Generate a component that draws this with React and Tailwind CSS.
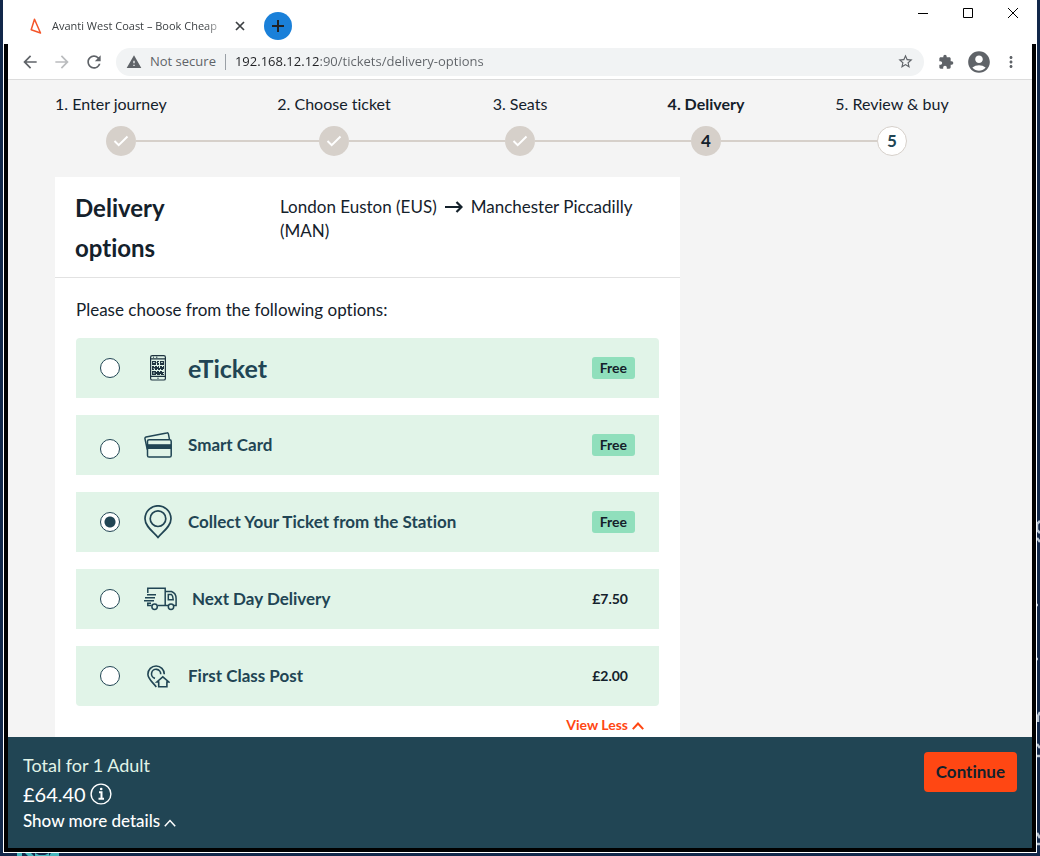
import { useState } from "react";
import {
  MdAccountCircle,
  MdArrowBack,
  MdArrowForward,
  MdExtension,
  MdMoreVert,
  MdRefresh,
  MdStarBorder,
  MdWarning,
} from "react-icons/md";

const steps = [
  { n: 1, label: "1. Enter journey" },
  { n: 2, label: "2. Choose ticket" },
  { n: 3, label: "3. Seats" },
  { n: 4, label: "4. Delivery" },
  { n: 5, label: "5. Review & buy" },
];
const CURRENT = 4;

function PhoneIcon() {
  return (
    <svg width="16" height="26" viewBox="0 0 16 26" fill="none" stroke="#1f3440" strokeWidth="1.2">
      <rect x="0.6" y="0.6" width="14.8" height="24.4" rx="1.6" />
      <path d="M.6 3.9h14.8M.6 21.4h14.8" />
      <path d="M3 2.2h1M6 2.2h1.4M7.3 23.2h1.4" strokeWidth="1" />
      <path
        fill="#1f3440"
        stroke="none"
        d="M2 6h4v4H2zM10 6h4v4h-4zM7 6h2v1H8v1h1v2H7V8H6.500V7H7zM2 11h2v1h1v-1h2v1h1v-1h1v2h1v-2h2v1h1v-1h1v3h-1v1h-2v-1h-1v1H8v-1H7v1H5v-1H4v1H2zM2 16h4v1h1v-1h2v1h1v-1h2v1h2v1h-1v1h1v1h-3v-1h-1v1H7v-1H6v1H2z"
      />
      <path d="M3.200 7.500h1.500M11.200 7.500h1.500M3.500 13.500h1M3.200 18h1.500" stroke="#e1f4e8" strokeWidth="1" />
    </svg>
  );
}

function CardsIcon() {
  return (
    <svg width="28" height="26" viewBox="0 0 28 26" fill="none" stroke="#214554" strokeWidth="1.5">
      <path d="M3.300 17.500 1 6.800c-.2-.9.200-1.500 1-1.700L22.700.9c.8-.2 1.500.2 1.700 1l1 5.300" />
      <rect x="3.500" y="7.700" width="23.700" height="17.300" rx="1.600" />
      <path d="M3.500 14.600h23.700" strokeWidth="4.800" />
    </svg>
  );
}

function PinIcon() {
  return (
    <svg width="28" height="34" viewBox="0 0 28 34" fill="none" stroke="#214554" strokeWidth="1.700">
      <path d="M14 32.500C9.500 27 1 21.500 1 13.800a13 13 0 0 1 26 0C27 21.500 18.500 27 14 32.500z" />
      <circle cx="14" cy="13.700" r="7.800" />
    </svg>
  );
}

function TruckIcon() {
  return (
    <svg width="33" height="24" viewBox="0 0 33 24" fill="none" stroke="#214554" strokeWidth="1.500">
      <path d="M3.800 6V1.200h17.400v17.300h-7.500M3.800 16.500v2h3.800M21.200 4.500h6.300c2.700 1 4.600 4 4.600 7v7h-2.300M21.200 18.500h2.800" />
      <path d="M3 7.800h9M1 10.800h10M0 13.800h10M3 16.300h4" />
      <path d="M24.300 7.500h3.200c1 .8 1.600 2.500 1.700 5.200h-4.900z" />
      <circle cx="10.600" cy="19.800" r="2.700" />
      <circle cx="27" cy="19.800" r="2.700" />
    </svg>
  );
}

function HomePinIcon() {
  return (
    <svg width="23" height="23" viewBox="0 0 23 23" fill="none" stroke="#214554" strokeWidth="1.600">
      <path d="M9.300 22C6 17.500 .9 14 .9 9.200a8.200 8.200 0 0 1 16.400 0" />
      <path d="M8 13.400a4.600 4.600 0 1 1 5.700-4.200" />
      <path d="M9.800 17l6-5.200 6 5.200h-1.900v4.800h-8.200V17z" />
    </svg>
  );
}

const options = [
  { id: "eticket", title: "eTicket", price: "Free", Icon: PhoneIcon, shape: "rounded-t", titleCls: "text-[25px]", iconCls: "pl-1.5 w-11", radioCls: "" },
  { id: "smart", title: "Smart Card", price: "Free", Icon: CardsIcon, shape: "", titleCls: "text-[17px]", iconCls: "w-11", radioCls: "mt-2" },
  { id: "station", title: "Collect Your Ticket from the Station", price: "Free", Icon: PinIcon, shape: "", titleCls: "text-[17px]", iconCls: "w-11", radioCls: "" },
  { id: "nextday", title: "Next Day Delivery", price: "£7.50", Icon: TruckIcon, shape: "", titleCls: "text-[17px]", iconCls: "w-12", radioCls: "" },
  { id: "post", title: "First Class Post", price: "£2.00", Icon: HomePinIcon, shape: "rounded-b", titleCls: "text-[17px]", iconCls: "w-11 pl-[3px]", radioCls: "" },
];

function Step({ n, label }) {
  const first = n === 1;
  const last = n === steps.length;
  const done = n < CURRENT;
  const line = "h-0.5 flex-1";
  return (
    <li className="flex flex-col gap-2.5">
      <span className={`${first ? "text-left" : "text-center"} ${n === CURRENT ? "font-bold" : ""} whitespace-nowrap text-base`}>
        {label}
      </span>
      <div className="flex items-center">
        {first ? <span className="w-[51px]" /> : <span className={`${line} bg-[#d6d0ca]`} />}
        <span
          className={`flex size-[30px] items-center justify-center rounded-full text-[17px] font-bold ${
            last ? "border border-[#d6d0ca] bg-white text-[#214554]" : "bg-[#d6d0ca]"
          }`}
        >
          {done ? (
            <svg width="16" height="12" viewBox="0 0 16 12" fill="none" stroke="#fff" strokeWidth="2">
              <path d="M1.500 6l4.200 4.200L14.500 1.500" />
            </svg>
          ) : (
            n
          )}
        </span>
        <span className={last ? line : `${line} bg-[#d6d0ca]`} />
      </div>
    </li>
  );
}

function Chevron({ width, height, weight }) {
  return (
    <svg width={width} height={height} viewBox="0 0 12 8" fill="none" stroke="currentColor" strokeWidth={weight}>
      <path d="M.8 7.200L6 1.500l5.200 5.700" />
    </svg>
  );
}

function TitleBar() {
  return (
    <header className="flex h-11 items-start justify-between pl-6 pr-[18px]">
      <div className="flex items-center pt-3">
        <svg width="12" height="16" viewBox="0 0 12 16" fill="none" stroke="#f4552a" strokeWidth="1.500" strokeLinejoin="round" className="ml-0.5">
          <path d="M4.500 1.200L1.200 11.800l9.300 3.200z" />
        </svg>
        <span className="ml-2.5 w-[174px] overflow-hidden whitespace-nowrap text-[11px] text-[#3c4043] [mask-image:linear-gradient(to_right,#000_88%,transparent)]">
          Avanti West Coast – Book Cheap
        </span>
        <button aria-label="Close tab" className="ml-2 flex size-3 items-center justify-center">
          <svg width="10" height="10" viewBox="0 0 10 10" stroke="#3c4043" strokeWidth="1.700">
            <path d="M1 1l8 8M9 1L1 9" />
          </svg>
        </button>
        <button aria-label="New tab" className="ml-[18px] flex size-7 items-center justify-center rounded-full bg-[#1a80d9]">
          <svg width="12" height="12" viewBox="0 0 12 12" stroke="#202124" strokeWidth="2">
            <path d="M6 0v12M0 6h12" />
          </svg>
        </button>
      </div>
      <div className="flex items-center gap-[35px] pt-2">
        <button aria-label="Minimize">
          <svg width="10" height="10" viewBox="0 0 10 10" stroke="#000">
            <path d="M0 5.500h10" />
          </svg>
        </button>
        <button aria-label="Maximize">
          <svg width="10" height="10" viewBox="0 0 10 10" fill="none" stroke="#000">
            <path d="M.5.5h9v9h-9z" />
          </svg>
        </button>
        <button aria-label="Close window">
          <svg width="10" height="10" viewBox="0 0 10 10" stroke="#000">
            <path d="M0 0l10 10M10 0L0 10" />
          </svg>
        </button>
      </div>
    </header>
  );
}

function Toolbar() {
  return (
    <nav className="flex h-9 items-center border-b border-[#dcdcdc] px-3 text-[#5f6368]">
      <button aria-label="Back"><MdArrowBack size={20} /></button>
      <button aria-label="Forward" className="ml-3 text-[#babcbe]"><MdArrowForward size={20} /></button>
      <button aria-label="Reload" className="ml-3"><MdRefresh size={20} /></button>
      <div className="ml-3 flex h-7 flex-1 items-center rounded-full bg-[#f1f3f4] px-2.5 text-[13px]">
        <MdWarning size={16} />
        <span className="ml-2">Not secure</span>
        <span className="mx-[9px] h-4 w-px bg-[#9aa0a6]" />
        <input
          aria-label="Address"
          defaultValue="192.168.12.12:90/tickets/delivery-options"
          className="min-w-0 flex-1 bg-[linear-gradient(to_right,#202124_85px,#5f6368_85px)] bg-clip-text text-transparent outline-none"
        />
        <button aria-label="Bookmark this page"><MdStarBorder size={17} /></button>
      </div>
      <button aria-label="Extensions" className="ml-3.5"><MdExtension size={16} /></button>
      <button aria-label="Profile" className="ml-3"><MdAccountCircle size={26} /></button>
      <button aria-label="Menu" className="ml-2.5"><MdMoreVert size={18} /></button>
    </nav>
  );
}

export default function App() {
  const [selected, setSelected] = useState("station");
  return (
    <div className="relative flex min-h-screen flex-col overflow-hidden bg-[#12284a] px-[3px] pb-[3px] font-['Open_Sans',sans-serif]">
      <svg className="absolute right-0 top-0" width="3" height="856" viewBox="0 0 3 856" fill="none" stroke="#b9c6d3" strokeWidth="2.500" aria-hidden="true">
        <path d="M3 521L0 524v6l3 3M0 538l3 4M0 605h1M0 659h1M3 712L1 716v6M0 744l3 4M0 756h3M0 833l3 5M0 844h3" />
      </svg>
      <svg className="absolute bottom-0 left-4" width="46" height="3" viewBox="0 0 46 3" fill="#45b7bd" aria-hidden="true">
        <path d="M1 0h5v3H1zM9 0h6l3 3H12zM19 0l4 2h6l4-2v3H19zM35 0h8v3H33z" />
      </svg>
      <div className="flex flex-1 flex-col bg-white px-px pb-px">
        <TitleBar />
        <div className="flex flex-1 flex-col border-4 border-t-0 border-black">
          <Toolbar />
          <div className="flex flex-1 flex-col bg-[#f4f4f4] font-[Lato,sans-serif] text-[17px] leading-6 text-[#14212b] [font-variant-ligatures:none]">
            <main className="flex flex-1 flex-col px-[47px] pt-3">
              <ol className="grid grid-cols-5">
                {steps.map((s) => (
                  <Step key={s.n} {...s} />
                ))}
              </ol>
              <section className="mt-[21px] w-full max-w-[625px] flex-1 bg-white">
                <div className="flex border-b border-[#e2e2e2] px-5 pb-[9px] pt-[11px]">
                  <h1 className="w-[205px] shrink-0 pr-16 text-2xl font-bold leading-10">Delivery options</h1>
                  <p className="flex-1 pt-[7px]">
                    London Euston (EUS)
                    <svg width="18" height="12" viewBox="0 0 18 12" fill="none" stroke="currentColor" strokeWidth="2.200" className="mx-2 inline align-baseline" aria-hidden="true">
                      <path d="M0 6h16M11.500 1l5 5-5 5" />
                    </svg>
                    Manchester Piccadilly (MAN)
                  </p>
                </div>
                <form className="px-[21px] pt-5">
                  <p>Please choose from the following options:</p>
                  <div className="mt-4 flex flex-col gap-[17px]">
                    {options.map(({ id, title, price, Icon, shape, titleCls, iconCls, radioCls }) => (
                      <label key={id} className={`flex h-[60px] items-center bg-[#e1f4e8] px-6 ${shape}`}>
                        <input
                          type="radio"
                          name="delivery"
                          value={id}
                          checked={selected === id}
                          onChange={() => setSelected(id)}
                          className={`size-5 appearance-none rounded-full border border-[#214554] bg-white checked:bg-[radial-gradient(circle,#214554_5px,#fff_6px)] ${radioCls}`}
                        />
                        <span className={`ml-6 shrink-0 ${iconCls}`}><Icon /></span>
                        <span className={`flex-1 font-bold text-[#214554] ${titleCls}`}>{title}</span>
                        <span className={`rounded-[3px] text-sm font-bold leading-[22px] ${price === "Free" ? "bg-[#90dfbc] px-2" : "px-[7px]"}`}>
                          {price}
                        </span>
                      </label>
                    ))}
                  </div>
                  <div className="flex justify-end pr-[15px] pt-[7px]">
                    <button type="button" className="flex items-baseline gap-1 text-sm font-bold leading-6 text-[#ff4713]">
                      View Less <Chevron width="12" height="8" weight="2" />
                    </button>
                  </div>
                </form>
              </section>
            </main>
            <footer className="flex items-start justify-between bg-[#214554] px-[15px] py-[15px] text-white">
              <div>
                <p className="text-lg leading-[27px] text-[#e1f4e8]">Total for 1 Adult</p>
                <p className="flex items-center gap-1 text-xl leading-[30px]">
                  £64.40
                  <svg width="22" height="22" viewBox="0 0 22 22" fill="none" stroke="currentColor" strokeWidth="1.400" aria-hidden="true">
                    <circle cx="11" cy="11" r="9.900" />
                    <path d="M9 9.200h2.500v6.300M8.500 15.800h5.500" strokeWidth="2" />
                    <circle cx="11.200" cy="6" r="1.300" fill="currentColor" stroke="none" />
                  </svg>
                </p>
                <button className="flex items-baseline gap-1 font-medium leading-6">
                  Show more details <Chevron width="12" height="8" weight="1.500" />
                </button>
              </div>
              <button className="h-10 rounded bg-[#ff4713] px-3 font-bold text-[#14212b]">Continue</button>
            </footer>
          </div>
        </div>
      </div>
    </div>
  );
}
